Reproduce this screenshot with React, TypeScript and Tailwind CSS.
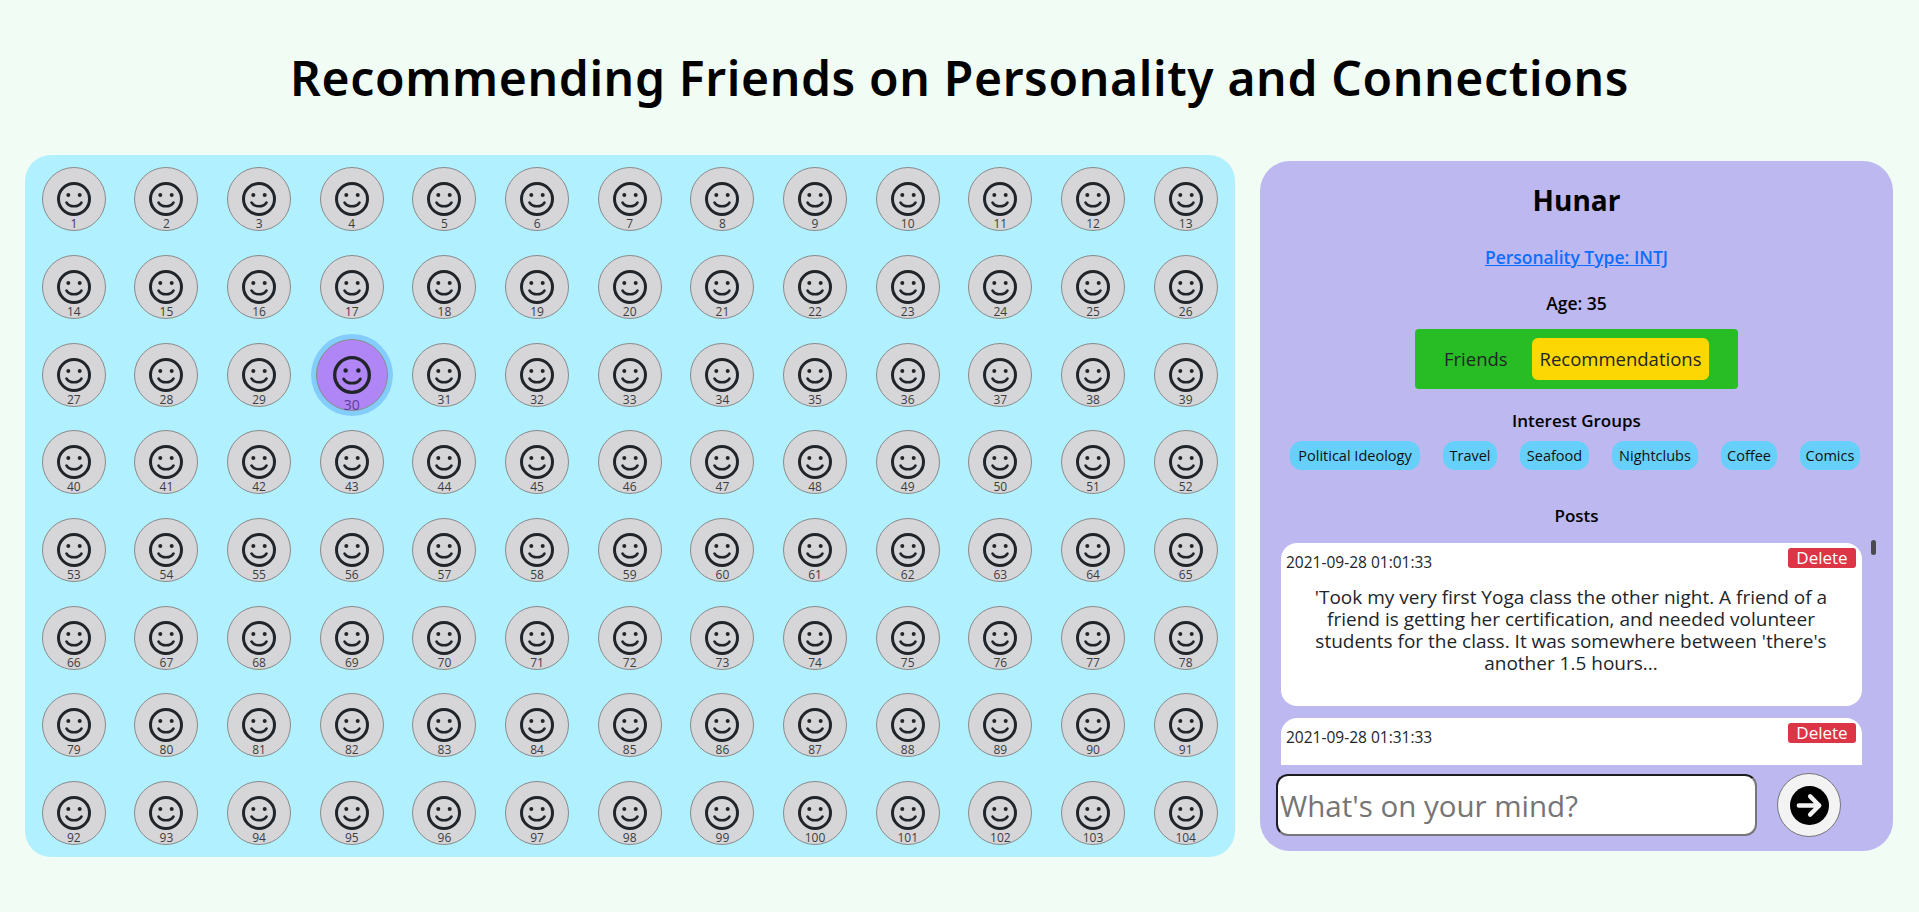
const interests = [
  { name: "Political Ideology", width: 130 },
  { name: "Travel", width: 54 },
  { name: "Seafood", width: 69 },
  { name: "Nightclubs", width: 86 },
  { name: "Coffee", width: 56 },
  { name: "Comics", width: 60 },
];
const people = Array.from({ length: 104 }, (_, i) => i + 1);

const Face = ({ size }: { size: number }) => (
  <svg width={size} height={size} viewBox="0 0 34 34" fill="none" className="text-[#212529]">
    <circle cx="17" cy="17" r="15.5" stroke="currentColor" strokeWidth="3" />
    <circle cx="11.3" cy="13" r="2" fill="currentColor" />
    <circle cx="22.7" cy="13" r="2" fill="currentColor" />
    <path d="M9.5 20.5c1.6 2.6 4.4 3.8 7.5 3.8s5.9-1.2 7.5-3.8" stroke="currentColor" strokeWidth="2.6" strokeLinecap="round" />
  </svg>
);

const Person = ({ n }: { n: number }) => {
  const selected = n === 30;
  return (
    <div
      className={
        selected
          ? "relative flex h-[72px] w-[72px] items-center justify-center rounded-full border border-[#8a8a8a] bg-[#b085f5] shadow-[0_0_0_5px_#82cdfd]"
          : "relative flex h-16 w-16 items-center justify-center rounded-full border border-[#8a8a8a] bg-[#d6d6d9]"
      }
    >
      <Face size={selected ? 38 : 34} />
      <span
        className={
          selected
            ? "absolute bottom-[-3px] left-0 right-0 text-center text-sm leading-4 text-[#5b3e9a]"
            : "absolute bottom-[-2px] left-0 right-0 text-center text-xs leading-4 text-[#3c3c3f]"
        }
      >
        {n}
      </span>
    </div>
  );
};

const Post = ({ date, text }: { date: string; text?: string }) => (
  <div className="mb-3 h-[163px] w-[581px] shrink-0 rounded-2xl bg-white pl-[5px] pr-1.5 pt-[5px]">
    <div className="flex items-start justify-between">
      <span className="pt-1 text-[15.5px] leading-5 text-[#212529]">{date}</span>
      <button className="h-5 w-[68px] rounded-[3px] bg-[#dc3545] text-[17px] leading-5 text-white">Delete</button>
    </div>
    {text && <p className="mx-auto mt-3.5 w-[530px] text-center text-[19px] leading-[22px] text-[#212529]">{text}</p>}
  </div>
);

const App = () => {
  return (
    <div className="h-[912px] w-full overflow-hidden bg-[#f0fcf4] font-['Open_Sans','Noto_Sans',sans-serif]">
      <div className="flex h-[155px] items-center justify-center">
        <h1 className="font-['Noto_Sans',sans-serif] text-5xl font-semibold tracking-[0.65px] text-black">
          Recommending Friends on Personality and Connections
        </h1>
      </div>

      <div className="flex items-center gap-[25px] pl-[25px]">
        {/* Grid of people */}
        <div className="grid h-[702px] w-[1210px] grid-cols-[repeat(13,1fr)] grid-rows-[repeat(8,1fr)] place-items-center rounded-[26px] bg-[#b1f0fe] pl-[2.5px] pr-[3px] pt-[0.5px]">
          {people.map((n) => (
            <Person key={n} n={n} />
          ))}
        </div>

        {/* Profile */}
        <div className="flex h-[690px] w-[633px] flex-col items-center rounded-[30px] bg-[#bdb8f0] pt-[19px]">
          <h2 className="text-[28px] font-bold leading-10 text-black">Hunar</h2>
          <a href="#" className="mt-[25px] text-[17.5px] font-semibold leading-6 text-[#0d6efd] underline">
            Personality Type: INTJ
          </a>
          <p className="mt-[22px] text-[17.5px] font-semibold leading-6 text-black">Age: 35</p>

          <div className="mt-3.5 flex h-[60px] w-[323px] items-center rounded bg-[#28bd24]">
            <span className="w-[117px] pl-[29px] text-[18.5px] text-[#212529]">Friends</span>
            <span className="flex h-[42px] w-[177px] items-center justify-center rounded-md bg-[#fcd703] text-[18.5px] text-[#212529]">
              Recommendations
            </span>
          </div>

          <p className="mt-5 text-[17px] font-semibold leading-6 text-black">Interest Groups</p>
          <div className="mt-2 flex w-full gap-[23px] pl-[30px]">
            {interests.map(({ name, width }) => (
              <span
                key={name}
                style={{ width }}
                className="flex h-[29px] items-center justify-center rounded-xl bg-[#66d0fb] text-[14.5px] text-[#111]"
              >
                {name}
              </span>
            ))}
          </div>

          <p className="mt-[34px] text-[17px] font-semibold leading-6 text-black">Posts</p>

          <div className="relative mt-[9px] h-[228px] w-full overflow-hidden pl-[21px]">
            <div className="flex h-full flex-col pt-1.5">
              <Post
                date="2021-09-28 01:01:33"
                text="'Took my very first Yoga class the other night. A friend of a friend is getting her certification, and needed volunteer students for the class. It was somewhere between 'there's another 1.5 hours..."
              />
              <Post date="2021-09-28 01:31:33" />
            </div>
            <div className="absolute left-[611px] top-[3px] h-[15px] w-[5px] rounded-sm bg-[#4a4a4f]" />
          </div>

          <div className="mt-2 flex w-full items-center pl-4">
            <input
              placeholder="What's on your mind?"
              className="h-[62px] w-[481px] rounded-xl border-2 border-t-[#1c1c22] border-l-[#1c1c22] border-r-[#767676] border-b-[#767676] bg-white pl-0.5 text-[29.5px] outline-none placeholder:text-[#757575]"
            />
            <button className="ml-5 flex h-16 w-16 items-center justify-center rounded-full border border-[#767676] bg-[#f3f3f3]">
              <svg width="39" height="39" viewBox="0 0 30 30" fill="none">
                <circle cx="15" cy="15" r="15" fill="#000" />
                <path d="M6.8 15h15.7M15.5 8l7 7-7 7" stroke="#f3f3f3" strokeWidth="3.4" strokeLinecap="round" strokeLinejoin="round" />
              </svg>
            </button>
          </div>
        </div>
      </div>
    </div>
  );
};

export default App;
